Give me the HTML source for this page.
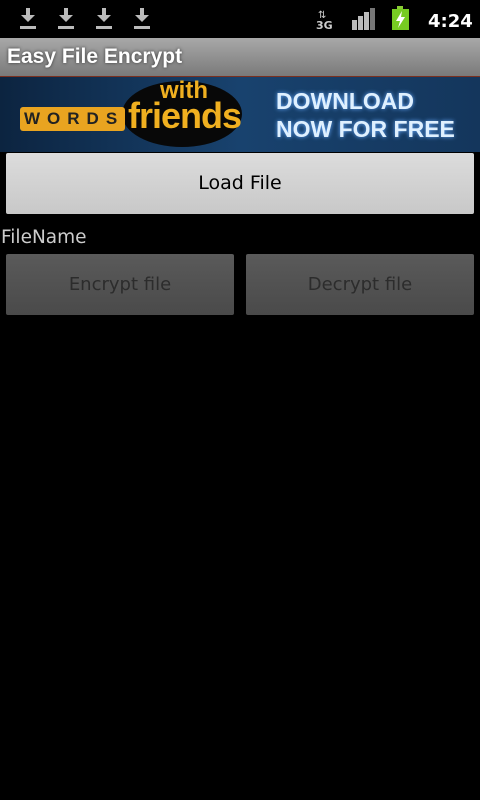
<!DOCTYPE html>
<html><head><style>
body{margin:0;width:480px;height:800px;background:#000;overflow:hidden;font-family:"DejaVu Sans","Liberation Sans",sans-serif;position:relative}
.a{position:absolute}
.btn{position:absolute;border-radius:2px;text-align:center;font-size:18px}
</style></head><body>
<svg class="a" style="left:0;top:0" width="480" height="38">
<g fill="#bbb">
<g id="d"><rect x="26" y="8" width="4" height="10"/><polygon points="21,15 35,15 28,22"/><rect x="20" y="26" width="16" height="3"/></g>
<use href="#d" x="38"/><use href="#d" x="76"/><use href="#d" x="114"/>
</g>
<text x="318" y="18" font-size="10" fill="#ccc" font-family="DejaVu Sans">⇅</text>
<text x="316" y="29" font-size="11" font-weight="bold" fill="#ccc" font-family="DejaVu Sans">3G</text>
<g fill="#bbb"><rect x="352" y="20" width="5" height="10"/><rect x="358" y="16" width="5" height="14"/><rect x="364" y="12" width="5" height="18"/><rect x="370" y="8" width="5" height="22" fill="#777"/></g>
<rect x="397" y="6" width="6" height="3" fill="#8c3"/>
<rect x="392" y="9" width="17" height="21" fill="#7c2"/>
<polygon points="402,11 396,21 400,21 398,28 405,17 401,17" fill="#fff"/>
<text x="428" y="27" font-size="18" font-weight="bold" fill="#fff" font-family="DejaVu Sans">4:24</text>
</svg>
<div class="a" style="left:0;top:38px;width:480px;height:38px;background:linear-gradient(#a8a8a8,#7a7a7a);color:#fff;font-weight:bold;font-size:21px;line-height:38px;padding-left:7px;text-shadow:0 0 3px #333;box-sizing:border-box;font-family:'Liberation Sans',sans-serif">Easy File Encrypt</div>
<div class="a" style="left:0;top:76px;width:480px;height:75px;background:linear-gradient(90deg,#0c2440,#18426e 50%,#14365c);border-top:1px solid #7a3020">
<div class="a" style="left:122px;top:4px;width:120px;height:66px;border-radius:50%;background:#080808"></div>
<div class="a" style="left:20px;top:30px;width:105px;height:24px;background:#e9a420;border-radius:3px;font:bold 17px 'Liberation Sans',sans-serif;letter-spacing:7px;color:#222;line-height:24px;padding-left:4px;box-sizing:border-box">WORDS</div>
<div class="a" style="left:160px;top:0px;font:bold 24px 'Liberation Sans',sans-serif;color:#f0b020">with</div>
<div class="a" style="left:128px;top:18px;font:bold 36px 'Liberation Sans',sans-serif;color:#f0b020;letter-spacing:-1px">friends</div>
<div class="a" style="left:276px;top:10px;font:bold 23px 'Liberation Sans',sans-serif;color:#dff0ff;line-height:28px;text-shadow:0 0 4px #6af">DOWNLOAD<br>NOW FOR FREE</div>
</div>
<div class="btn" style="left:6px;top:153px;width:468px;height:61px;background:linear-gradient(#dcdcdc,#c8c8c8);line-height:61px;color:#000;font-size:19px">Load File</div>
<div class="a" style="left:1px;top:227px;font-size:18.5px;color:#ccc">FileName</div>
<div class="btn" style="left:6px;top:254px;width:228px;height:61px;background:linear-gradient(#5a5a5a,#4a4a4a);line-height:61px;color:#2c2c2c">Encrypt file</div>
<div class="btn" style="left:246px;top:254px;width:228px;height:61px;background:linear-gradient(#5a5a5a,#4a4a4a);line-height:61px;color:#2c2c2c">Decrypt file</div>
</body></html>
